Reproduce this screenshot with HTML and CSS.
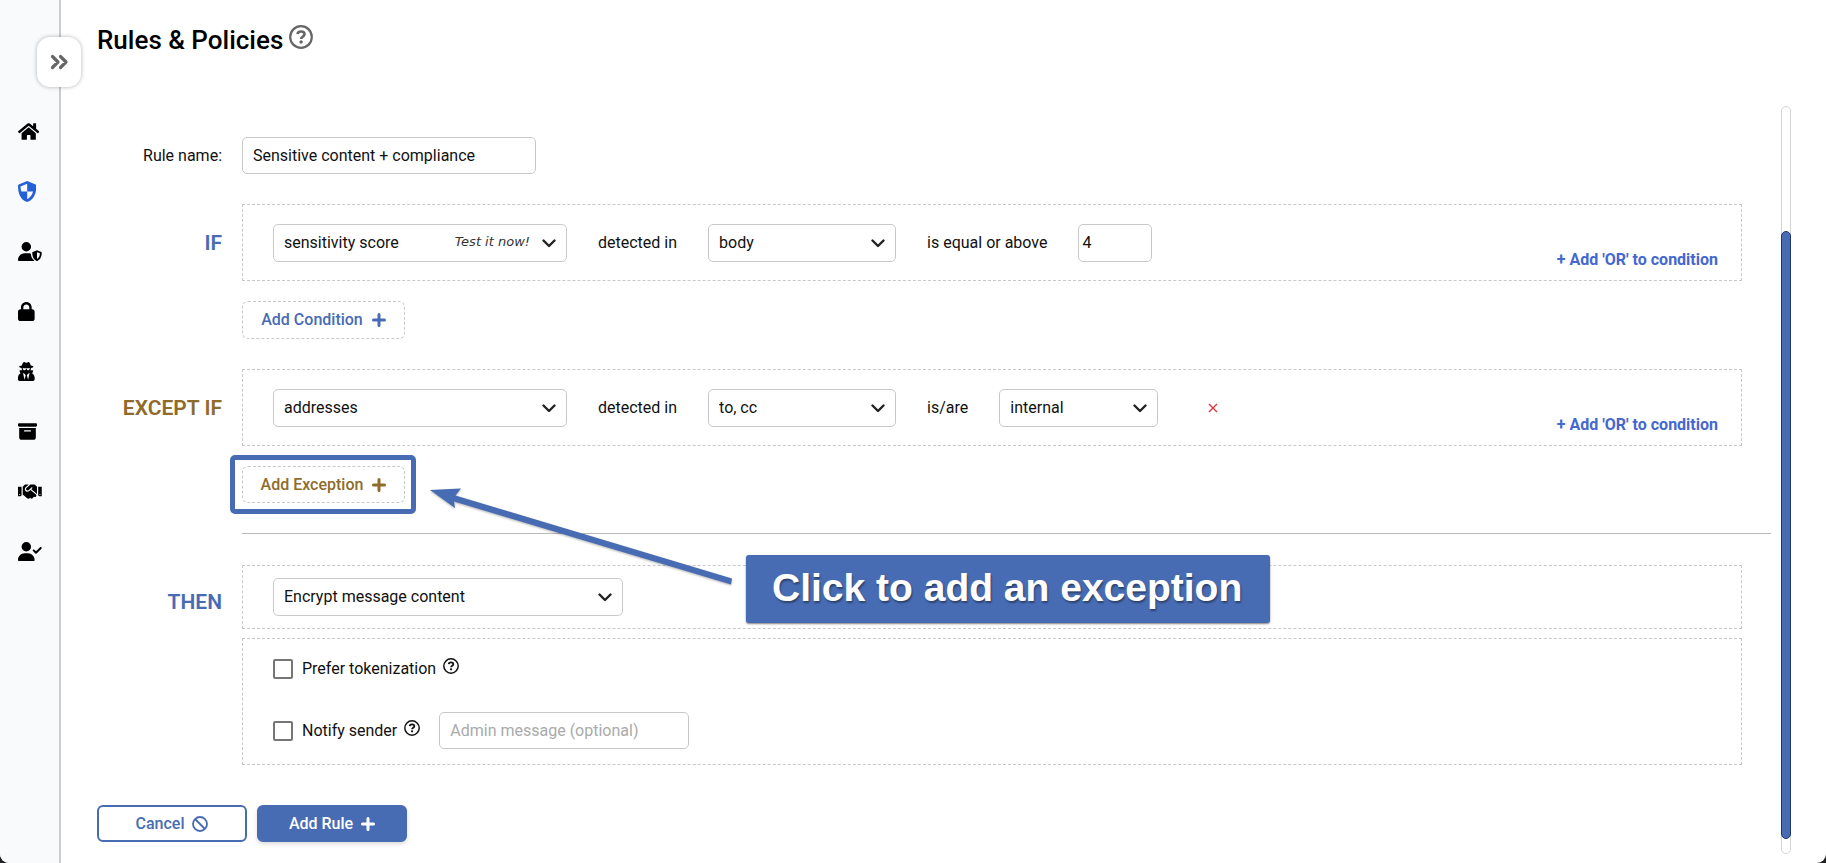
FILE: index.html
```html
<!DOCTYPE html>
<html lang="en">
<head>
  <meta charset="UTF-8" />
  <title>Rules &amp; Policies</title>
  <meta name="viewport" content="width=device-width, initial-scale=1.0"/>
  <link rel="stylesheet" href="styles.css">
</head>
<body>

<!-- shared icons -->
<svg class="sprite" aria-hidden="true">
  <symbol id="i-plus" viewBox="0 0 14 14"><path d="M7 1.500v11M1.500 7h11" fill="none" stroke="currentColor" stroke-width="3" stroke-linecap="round"/></symbol>
  <symbol id="i-chevron" viewBox="0 0 14 9"><path d="M1.500 1.500L7 7l5.500-5.500" fill="none" stroke="currentColor" stroke-width="2.400" stroke-linecap="round" stroke-linejoin="round"/></symbol>
  <symbol id="i-help" viewBox="0 0 24 24">
    <circle cx="12" cy="12" r="10.800" fill="none" stroke="currentColor" stroke-width="2.200"/>
    <path d="M8.600 9.200c.1-1.700 1.400-2.700 3.400-2.700s3.500 1.100 3.500 2.800c0 2.300-3.400 2.300-3.400 4.700" fill="none" stroke="currentColor" stroke-width="2.700"/>
    <circle cx="12.100" cy="17" r="1.700" fill="currentColor"/>
  </symbol>
</svg>

<div class="app">
  <aside class="sidebar">
    <button type="button" class="toggle" aria-label="Expand menu">
      <svg width="19" height="16" viewBox="0 0 19 16"><path d="M2.500 2.500L8 8l-5.500 5.500M10.500 2.500L16 8l-5.500 5.500" fill="none" stroke="currentColor" stroke-width="3.200" stroke-linecap="round" stroke-linejoin="round"/></svg>
    </button>
    <nav class="menu">
      <a href="#" aria-label="Home"><svg viewBox="0 0 576 512"><path d="M280.37 148.26L96 300.11V464a16 16 0 0 0 16 16l112.06-.29a16 16 0 0 0 15.92-16V368a16 16 0 0 1 16-16h64a16 16 0 0 1 16 16v95.64a16 16 0 0 0 16 16.05L464 480a16 16 0 0 0 16-16V300L295.67 148.26a12.19 12.19 0 0 0-15.3 0zM571.6 251.47L488 182.56V44.05a12 12 0 0 0-12-12h-56a12 12 0 0 0-12 12v72.61L318.47 43a48 48 0 0 0-61 0L4.34 251.47a12 12 0 0 0-1.600 16.900l25.500 31A12 12 0 0 0 45.150 301l235.220-193.740a12.190 12.190 0 0 1 15.300 0L530.900 301a12 12 0 0 0 16.900-1.600l25.500-31a12 12 0 0 0-1.700-16.930z"/></svg></a>
      <a href="#" class="active" aria-label="Rules and policies"><svg viewBox="0 0 448 512"><path fill-rule="evenodd" d="M224 0l205 84c12 5 19 16 19 29 0 190-60 330-205 395-12 5-26 5-38 0C60 443 0 303 0 113c0-13 7-24 19-29zM224 66L60 134c3 48 10 88 22 122h142zM224 256v188c75-42 120-105 142-188z"/></svg></a>
      <a href="#" aria-label="User protection"><svg viewBox="0 0 640 512"><path d="M224 256a128 128 0 1 0 0-256 128 128 0 1 0 0 256zM178 304C80 304 0 384 0 482c0 17 13 30 30 30h388c10 0 18-4 23-11-60-40-93-105-93-186-25-8-50-11-78-11z"/><path fill-rule="evenodd" d="M512 224l118 46c6 3 10 8 10 15 0 110-35 185-118 225-7 3-13 3-20 0-83-40-118-115-118-225 0-7 4-12 10-15zM512 276v180c50-28 75-76 78-150z"/></svg></a>
      <a href="#" aria-label="Encryption"><svg viewBox="0 0 448 512"><path d="M144 144v48H304V144c0-44.200-35.800-80-80-80s-80 35.800-80 80zM80 192V144C80 64.500 144.500 0 224 0s144 64.500 144 144v48h16c35.300 0 64 28.700 64 64V448c0 35.300-28.700 64-64 64H64c-35.300 0-64-28.700-64-64V256c0-35.300 28.700-64 64-64H80z"/></svg></a>
      <a href="#" aria-label="Threats"><svg viewBox="0 0 448 512"><path d="M383.9 308.3l23.9-62.6c4-10.500-3.700-21.700-15-21.700h-58.500c11-18.900 17.800-40.600 17.800-64v-.3c39.200-7.800 64-19.100 64-31.700 0-13.300-27.300-25.100-70.100-33-9.200-32.800-27-65.800-40.600-82.800-9.500-11.900-25.900-15.600-39.500-8.800l-27.600 13.800c-9 4.500-19.600 4.500-28.600 0L182.100 3.400c-13.600-6.800-30-3.100-39.500 8.800-13.500 17-31.400 50-40.600 82.800-42.700 7.900-70 19.700-70 33 0 12.600 24.800 23.900 64 31.700v.3c0 23.400 6.800 45.100 17.800 64H56.300c-11.500 0-19.200 11.700-14.700 22.300l25.800 60.200C27.300 329.800 0 372.700 0 422.400v44.800C0 491.900 20.100 512 44.800 512h358.400c24.700 0 44.800-20.100 44.800-44.800v-44.800c0-48.400-25.800-90.400-64.100-114.100zM176 480l-41.600-192 49.600 32 24 40-32 120zm96 0l-32-120 24-40 49.600-32L272 480zm41.700-298.500c-3.900 11.900-7 24.600-16.500 33.400-10.100 9.300-48 22.400-64-25-2.800-8.400-15.400-8.400-18.300 0-17 50.200-56 32.400-64 25-9.500-8.800-12.700-21.500-16.500-33.400-.8-2.500-6.300-5.700-6.300-5.800v-10.800c28.300 3.600 61 5.800 96 5.800s67.700-2.100 96-5.800v10.800c-.1.1-5.600 3.200-6.400 5.800z"/></svg></a>
      <a href="#" aria-label="Archive"><svg viewBox="0 0 512 512"><path d="M32 32H480c17.700 0 32 14.300 32 32V96c0 17.700-14.300 32-32 32H32C14.300 128 0 113.700 0 96V64C0 46.300 14.300 32 32 32zm0 128H480V416c0 35.300-28.700 64-64 64H96c-35.300 0-64-28.700-64-64V160zm128 80c0 8.800 7.200 16 16 16H336c8.800 0 16-7.200 16-16s-7.200-16-16-16H176c-8.800 0-16 7.200-16 16z"/></svg></a>
      <a href="#" aria-label="Partners"><svg viewBox="0 0 640 512"><path d="M434.700 64h-85.900c-8 0-15.700 3-21.600 8.400l-98.300 90c-.1.1-.2.3-.3.4-16.600 15.600-16.300 40.500-2.100 56 12.700 13.900 39.400 17.600 56.100 2.700.1-.1.3-.1.4-.2l79.900-73.200c6.500-5.900 16.700-5.500 22.600 1 6 6.500 5.500 16.600-1 22.600l-26.100 23.900L504 313.800c2.900 2.400 5.500 5 7.900 7.700V128l-54.600-54.600c-5.900-6-14.100-9.400-22.600-9.400zM544 128.200v223.900c0 17.700 14.300 32 32 32h64V128.200h-96zm48 223.900c-8.800 0-16-7.200-16-16s7.200-16 16-16 16 7.200 16 16-7.200 16-16 16zM0 384h64c17.700 0 32-14.300 32-32V128.200H0V384zm48-63.900c8.800 0 16 7.200 16 16s-7.200 16-16 16-16-7.200-16-16c0-8.900 7.200-16 16-16zm435.900 18.600L334.600 217.500l-30 27.500c-29.700 27.100-75.200 24.500-101.700-4.400-26.900-29.400-24.800-74.900 4.400-101.700L289.100 64h-83.800c-8.500 0-16.600 3.400-22.600 9.400L128 128v223.900h18.300l90.500 81.900c27.400 22.300 67.700 18.100 90-9.300l.2-.2 17.900 15.500c15.900 13 39.400 10.500 52.300-5.400l31.400-38.600 5.400 4.400c13.700 11.100 33.900 9.100 45-4.700l9.500-11.700c11.200-13.800 9.100-33.900-4.600-45.100z"/></svg></a>
      <a href="#" aria-label="Approvals"><svg viewBox="0 0 640 512"><path d="M224 256a128 128 0 1 0 0-256 128 128 0 1 0 0 256zm-45.700 48C79.800 304 0 383.800 0 482.300C0 498.700 13.300 512 29.700 512H418.300c16.400 0 29.700-13.300 29.700-29.700C448 383.800 368.200 304 269.700 304H178.300zM632 180L502 311c-9.400 9.400-24.600 9.400-33.900 0l-66-66c-9.400-9.400-9.400-28 0-38s28-9.400 38 0l45 45L594 142c9.400-9.400 28-9.400 38 0s9.400 28 0 38z"/></svg></a>
    </nav>
  </aside>

  <main class="main">
    <header class="page-head">
      <h1>Rules &amp; Policies</h1>
      <a href="#" class="help help-lg" aria-label="Help"><svg><use href="#i-help"/></svg></a>
    </header>

    <div class="scroller">
      <form class="rule-form">
        <div class="row name-row">
          <label class="row-label" for="ruleName">Rule name:</label>
          <input type="text" id="ruleName" class="field w-lg" value="Sensitive content + compliance" />
        </div>

        <div class="row if-row">
          <h2 class="row-label keyword">IF</h2>
          <div class="box condition">
            <div class="select w-lg">
              <select aria-label="Condition"><option>sensitivity score</option></select>
              <a href="#" class="test-link">Test it now!</a>
              <svg class="chevron"><use href="#i-chevron"/></svg>
            </div>
            <span>detected in</span>
            <div class="select w-md">
              <select aria-label="Detected in"><option>body</option></select>
              <svg class="chevron"><use href="#i-chevron"/></svg>
            </div>
            <label for="score">is equal or above</label>
            <input type="text" id="score" class="field score" value="4" />
            <button type="button" class="add-or">+ Add 'OR' to condition</button>
          </div>
        </div>

        <div class="row add-row">
          <button type="button" class="add">Add Condition <svg class="plus"><use href="#i-plus"/></svg></button>
        </div>

        <div class="row except-row">
          <h2 class="row-label keyword brown">EXCEPT IF</h2>
          <div class="box condition">
            <div class="select w-lg">
              <select aria-label="Exception"><option>addresses</option></select>
              <svg class="chevron"><use href="#i-chevron"/></svg>
            </div>
            <span>detected in</span>
            <div class="select w-md">
              <select aria-label="Exception detected in"><option>to, cc</option></select>
              <svg class="chevron"><use href="#i-chevron"/></svg>
            </div>
            <span>is/are</span>
            <div class="select w-sm">
              <select aria-label="Address type"><option>internal</option></select>
              <svg class="chevron"><use href="#i-chevron"/></svg>
            </div>
            <button type="button" class="remove" aria-label="Remove exception"><svg width="10" height="10" viewBox="0 0 10 10"><path d="M1 1l8 8M9 1L1 9" fill="none" stroke="currentColor" stroke-width="1.400"/></svg></button>
            <button type="button" class="add-or">+ Add 'OR' to condition</button>
          </div>
        </div>

        <div class="row add-row">
          <div class="highlight">
            <button type="button" class="add brown">Add Exception <svg class="plus"><use href="#i-plus"/></svg></button>
            <!-- tutorial arrow and caption over the form -->
            <svg class="arrow" width="304" height="100" viewBox="0 0 304 100"><path d="M0 4L31 2.500 25.500 9.500 302 92.500 301 98.500 24 15.500 25 22z"/></svg>
            <div class="callout">Click to add an exception</div>
          </div>
        </div>

        <hr>

        <div class="row then-row">
          <h2 class="row-label keyword">THEN</h2>
          <div class="box action">
            <div class="select w-xl">
              <select aria-label="Action"><option>Encrypt message content</option></select>
              <svg class="chevron"><use href="#i-chevron"/></svg>
            </div>
          </div>
        </div>

        <div class="row options-row">
          <div class="box options">
            <div class="option">
              <input type="checkbox" id="token" />
              <label for="token">Prefer tokenization</label>
              <a href="#" class="help" aria-label="About tokenization"><svg><use href="#i-help"/></svg></a>
            </div>
            <div class="option">
              <input type="checkbox" id="notify" />
              <label for="notify">Notify sender</label>
              <a href="#" class="help" aria-label="About notifications"><svg><use href="#i-help"/></svg></a>
              <input type="text" class="field admin" aria-label="Admin message" placeholder="Admin message (optional)" />
            </div>
          </div>
        </div>

        <div class="buttons">
          <button type="button" class="btn btn-outline">Cancel
            <svg width="16" height="16" viewBox="0 0 16 16"><g fill="none" stroke="currentColor" stroke-width="1.800"><circle cx="8" cy="8" r="7"/><path d="M3 3l10 10"/></g></svg>
          </button>
          <button type="button" class="btn btn-primary">Add Rule <svg class="plus"><use href="#i-plus"/></svg></button>
        </div>
      </form>

      <div class="scrollbar"><div class="thumb"></div></div>
    </div>
  </main>
</div>

</body>
</html>
```
FILE: styles.css
```css
* {
  box-sizing: border-box;
}
body {
  margin: 0;
  background: #222;
  font-family: Roboto, sans-serif;
  font-size: 16px;
  line-height: 20px;
  color: #111;
}
input, select, button {
  font: inherit;
  color: inherit;
}
button {
  cursor: pointer;
}
.sprite {
  position: absolute;
  width: 0;
  height: 0;
}

.app {
  display: flex;
  min-height: 100vh;
  background: #fff;
  border-radius: 0 0 9px 9px;
  overflow: hidden;
}

/* sidebar */
.sidebar {
  position: relative;
  flex: 0 0 61px;
  background: #f9fafc;
  border-right: 2px solid #ccc;
}
.toggle {
  position: absolute;
  top: 37px;
  right: -22px;
  width: 44px;
  height: 50px;
  padding: 0;
  display: flex;
  align-items: center;
  justify-content: center;
  background: #fff;
  border: 0;
  border-radius: 13px;
  box-shadow: 0 0 4px rgba(0,0,0,0.3);
  color: #666;
}
.menu {
  display: flex;
  flex-direction: column;
  gap: 40px;
  padding: 121px 0 0 18px;
}
.menu a {
  display: flex;
  align-items: center;
  height: 20px;
  color: #000;
}
.menu svg {
  height: 19px;
  fill: currentColor;
}
.menu .active {
  color: #2460d8;
}
.menu .active svg {
  height: 21px;
}

/* page */
.main {
  flex: 1;
  display: flex;
  flex-direction: column;
  padding: 22px 35px 9px 36px;
}
.page-head {
  display: flex;
  gap: 6px;
  height: 84px;
}
h1 {
  margin: 0;
  font-size: 26px;
  line-height: 36px;
  font-weight: 500;
  color: #000;
}
.help {
  color: #111;
  height: 16px;
}
.help svg {
  display: block;
  width: 16px;
  height: 16px;
}
.help-lg {
  color: #666;
  padding-top: 3px;
}
.help-lg svg {
  width: 24px;
  height: 24px;
}
.scroller {
  flex: 1;
  display: flex;
  gap: 10px;
}
.rule-form {
  flex: 1;
  padding-top: 31px;
}
.scrollbar {
  display: flex;
  flex-direction: column;
  justify-content: flex-end;
  width: 10px;
  padding-bottom: 14px;
  border: 1px solid #d4d4d4;
  border-radius: 5px;
}
.thumb {
  height: 83%;
  margin: 0 -1px;
  background: #486cb4;
  border: 1px solid #22386a;
  border-radius: 5px;
}

/* form rows */
.row {
  display: grid;
  grid-template-columns: 125px 1fr;
  column-gap: 20px;
  align-items: center;
  padding-right: 29px;
}
.row-label {
  text-align: right;
}
.keyword {
  margin: 0;
  font-size: 21px;
  line-height: 24px;
  font-weight: 600;
  color: #486cb4;
}
.keyword.brown, .add.brown {
  color: #8f6b2b;
}
.then-row .keyword {
  padding-top: 10px;
}
.name-row {
  margin-bottom: 30px;
}
.add-row {
  margin: 20px 0 30px;
}
.add-row > *, .options-row > * {
  grid-column: 2;
  justify-self: start;
}
.options-row > * {
  justify-self: stretch;
}
.box {
  border: 1px dashed #c8c8c8;
}
.condition {
  display: flex;
  align-items: center;
  gap: 31px;
  height: 77px;
  padding: 0 23px 0 30px;
}
.field, .select select {
  height: 37px;
  border: 1px solid #c8c8c8;
  border-radius: 5px;
  background: #fff;
  padding: 0 10px;
}
.select {
  position: relative;
}
.select select {
  width: 100%;
  height: 38px;
  display: block;
  appearance: none;
}
.chevron {
  position: absolute;
  right: 11px;
  top: 15px;
  width: 14px;
  height: 9px;
  color: #222;
  pointer-events: none;
}
.test-link {
  position: absolute;
  right: 37px;
  top: 8px;
  font: italic 13px/20px "DejaVu Sans", sans-serif;
  color: #333;
  text-decoration: none;
}
.w-sm { width: 159px; }
.w-md { width: 188px; }
.w-lg { width: 294px; }
.w-xl { width: 350px; }
.field.score {
  width: 74px;
  height: 38px;
  padding: 0 3px;
}
.field.admin {
  width: 250px;
  margin-left: 19px;
}
.field::placeholder {
  color: #aaa;
}
.add-or {
  align-self: flex-end;
  margin: 0 0 10px auto;
  padding: 0;
  border: 0;
  background: none;
  font-weight: 700;
  color: #4468d0;
}
.remove {
  display: flex;
  margin-left: 19px;
  padding: 0;
  border: 0;
  background: none;
  color: #d9363e;
}
.add {
  display: flex;
  align-items: center;
  justify-content: center;
  gap: 9px;
  width: 163px;
  height: 38px;
  padding: 0;
  border: 1px dashed #c8c8c8;
  border-radius: 6px;
  background: #fff;
  font-weight: 500;
  color: #486cb4;
}
.add.brown {
  height: 37px;
}
.plus {
  width: 14px;
  height: 14px;
}
hr {
  margin: 0 0 31px 145px;
  border: 0;
  border-top: 1px solid #b8b8b8;
}
.action {
  display: flex;
  align-items: center;
  height: 64px;
  padding-left: 30px;
}
.options-row {
  margin: 9px 0 40px;
}
.options {
  display: flex;
  flex-direction: column;
  gap: 25px;
  padding: 11px 30px 15px;
}
.option {
  display: flex;
  align-items: center;
  height: 37px;
}
.option label {
  margin: 0 7px 0 9px;
}
.option .help {
  margin-bottom: 5px;
}
.option input[type="checkbox"] {
  appearance: none;
  width: 20px;
  height: 20px;
  margin: 0;
  border: 2px solid #767676;
  border-radius: 2px;
}
.buttons {
  display: flex;
  gap: 10px;
}
.btn {
  display: flex;
  align-items: center;
  justify-content: center;
  gap: 8px;
  width: 150px;
  height: 37px;
  padding: 0;
  border: 2px solid #486cb4;
  border-radius: 6px;
  font-weight: 500;
}
.btn-outline {
  background: #fff;
  color: #486cb4;
}
.btn-primary {
  background: #486cb4;
  color: #fff;
  box-shadow: 0 2px 4px rgba(0,0,0,0.15);
}

/* tutorial overlay */
.highlight {
  position: relative;
}
.highlight::before {
  content: "";
  position: absolute;
  inset: -11px -11px -11px -12px;
  border: 5px solid #486cb4;
  border-radius: 5px;
  pointer-events: none;
}
.arrow {
  position: absolute;
  left: 188px;
  top: 20px;
  z-index: 1;
  fill: #486cb4;
  filter: drop-shadow(0 1px 1px rgba(0,0,0,0.3));
}
.callout {
  position: absolute;
  left: 504px;
  top: 89px;
  z-index: 1;
  padding: 10px 28px 12px 26px;
  border-radius: 3px;
  background: #486cb4;
  box-shadow: 0 1px 2px rgba(0,0,0,0.5);
  color: #fff;
  font: bold 39px/46px "Liberation Sans", sans-serif;
  text-shadow: 1px 2px 2px rgba(0,0,0,0.4);
  white-space: nowrap;
}
```
